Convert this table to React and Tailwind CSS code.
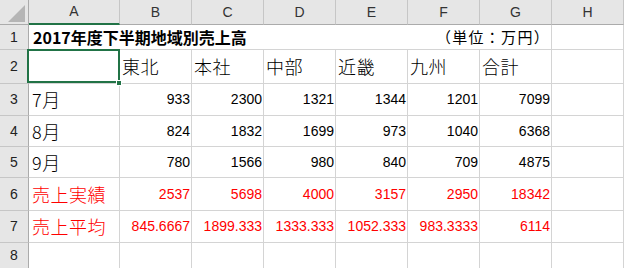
import React from "react";

const cols = ["A", "B", "C", "D", "E", "F", "G", "H"];
const regions = ["東北", "本社", "中部", "近畿", "九州", "合計"];
const rows = [
  { n: 3, label: "7月", vals: ["933", "2300", "1321", "1344", "1201", "7099"], red: false, h: "h-[32px]" },
  { n: 4, label: "8月", vals: ["824", "1832", "1699", "973", "1040", "6368"], red: false, h: "h-[31px]" },
  { n: 5, label: "9月", vals: ["780", "1566", "980", "840", "709", "4875"], red: false, h: "h-[31px]" },
  { n: 6, label: "売上実績", vals: ["2537", "5698", "4000", "3157", "2950", "18342"], red: true, h: "h-[33px]" },
  { n: 7, label: "売上平均", vals: ["845.6667", "1899.333", "1333.333", "1052.333", "983.3333", "6114"], red: true, h: "h-[32px]" },
];

const jp = "font-['Noto_Sans_CJK_JP',sans-serif]";
const num = "font-['Liberation_Sans','Noto_Sans_CJK_JP',sans-serif]";

function RowHead({ n, h }) {
  return (
    <div className={`${h} w-[29px] shrink-0 bg-[#e6e6e6] border-r border-r-[#ababab] border-b border-b-[#c6c6c6] flex items-center justify-center text-[14px] text-[#222] ${num}`}>
      {n}
    </div>
  );
}

function Cell({ children, w = "w-[72px]", h, className = "" }) {
  return (
    <div className={`${h} ${w} shrink-0 border-r border-b border-[#d4d4d4] flex items-center ${className}`}>
      {children}
    </div>
  );
}

export default function App() {
  return (
    <div className="w-[624px] h-[268px] overflow-hidden bg-white select-none">
      {/* column header */}
      <div className="flex h-[25px]">
        <div className="w-[29px] shrink-0 bg-[#e6e6e6] border-r border-r-[#ababab] border-b border-b-[#ababab] flex items-end justify-end pr-[3px] pb-[2px]">
          <svg width="17" height="17" viewBox="0 0 17 17">
            <polygon points="17,0 17,17 0,17" fill="#b5b5b5" />
          </svg>
        </div>
        {cols.map((c, i) => (
          <div
            key={c}
            className={`${i === 0 ? "w-[91px] border-b-2 border-b-[#217346]" : "w-[72px] border-b border-b-[#ababab]"} shrink-0 bg-[#e6e6e6] border-r border-r-[#c6c6c6] flex items-center justify-center text-[14px] text-[#333] ${num}`}
          >
            {c}
          </div>
        ))}
      </div>

      {/* row 1 */}
      <div className="flex h-[25px]">
        <RowHead n={1} h="h-[25px]" />
        <div className={`h-[25px] w-[523px] shrink-0 border-r border-b border-[#d4d4d4] flex items-center justify-between pl-[4px] pr-[1px] ${jp}`}>
          <span className="text-[16px] font-bold tracking-[0px] text-black">2017年度下半期地域別売上高</span>
          <span className="text-[15px] tracking-[1.3px] text-black">（単位：万円）</span>
        </div>
        <Cell h="h-[25px]" />
      </div>

      {/* row 2 */}
      <div className="flex h-[34px]">
        <RowHead n={2} h="h-[34px]" />
        <div className="relative h-[34px] w-[91px] shrink-0 border-r border-b border-[#d4d4d4]">
          <div className="absolute -left-[2px] -top-px w-[93px] h-[34px] border-2 border-[#217346]" />
          <div className="absolute -right-[3px] -bottom-[3px] w-[6px] h-[6px] bg-[#217346] border border-white" />
        </div>
        {regions.map((r) => (
          <Cell key={r} h="h-[34px]" className={`pl-[2px] text-[18px] font-light tracking-[0.5px] text-black ${jp}`}>
            {r}
          </Cell>
        ))}
        <Cell h="h-[34px]" />
      </div>

      {rows.map((row) => (
        <div key={row.n} className="flex">
          <RowHead n={row.n} h={row.h} />
          <Cell
            w="w-[91px]"
            h={row.h}
            className={`pl-[3px] text-[18px] font-light tracking-[0.5px] ${row.red ? "text-[#ff0000]" : "text-black"} ${jp}`}
          >
            {row.label}
          </Cell>
          {row.vals.map((v, i) => (
            <Cell
              key={i}
              h={row.h}
              className={`justify-end pr-[1px] text-[14px] ${row.red ? "text-[#ff0000]" : "text-black"} ${num}`}
            >
              {v}
            </Cell>
          ))}
          <Cell h={row.h} />
        </div>
      ))}

      {/* row 8 */}
      <div className="flex">
        <RowHead n={8} h="h-[26px]" />
        <Cell w="w-[91px]" h="h-[26px]" />
        {regions.map((r) => (
          <Cell key={r} h="h-[26px]" />
        ))}
        <Cell h="h-[26px]" />
      </div>
    </div>
  );
}
